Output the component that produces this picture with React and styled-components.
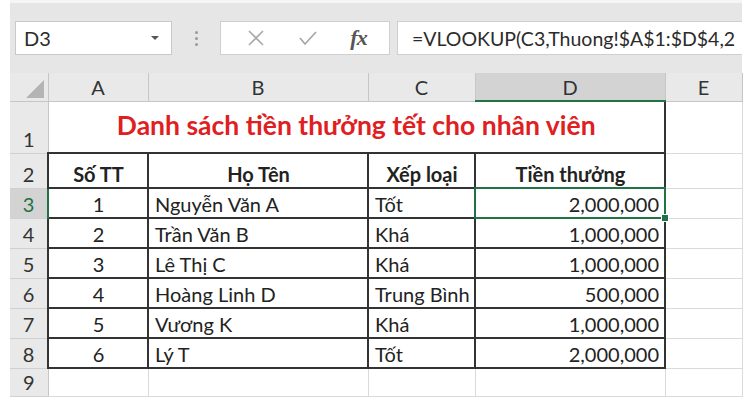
import React from 'react'
import styled, { createGlobalStyle, css } from 'styled-components'

const GlobalStyle = createGlobalStyle`
  body {
    margin: 0;
    background: #fff;
    font-family: Lato, "Open Sans", sans-serif;
  }
`

const green = '#217346'
const line = '#333'
const grid = '#dadada'

const Sheet = styled.div`
  width: 732px;
  padding: 0 8px 5px 10px;
`

const TopBar = styled.div`
  height: 73px;
  background: #e6e6e6;
  display: flex;
  align-items: flex-start;
  padding: 18px 0 0 5px;
  box-sizing: border-box;
  border-top: 3px solid #f6f6f6;
`

const NameBox = styled.div`
  width: 157px;
  height: 34px;
  box-sizing: border-box;
  background: #fff;
  border: 1px solid #c9c9c9;
  display: flex;
  align-items: center;
  justify-content: space-between;
  padding: 0 12px 0 8px;
  font-size: 20px;
  color: #2b2b2b;
`

const Caret = styled.span`
  width: 0;
  height: 0;
  border-left: 4px solid transparent;
  border-right: 4px solid transparent;
  border-top: 4px solid #555;
`

const Grip = styled.div`
  width: 48px;
  height: 34px;
  display: flex;
  flex-direction: column;
  align-items: center;
  justify-content: center;
  gap: 3px;

  span {
    width: 3px;
    height: 3px;
    border-radius: 50%;
    background: #9a9a9a;
  }
`

const ButtonBox = styled.div`
  width: 170px;
  height: 34px;
  box-sizing: border-box;
  background: #fff;
  border: 1px solid #cfcfcf;
  display: flex;
  align-items: center;
  justify-content: space-around;
  padding: 0 6px 0 10px;
`

const Fx = styled.span`
  font-family: "Liberation Serif", serif;
  font-style: italic;
  font-weight: 700;
  font-size: 22px;
  color: #555;
  letter-spacing: -1px;
`

const FormulaBox = styled.div`
  flex: 1;
  height: 34px;
  margin-left: 7px;
  box-sizing: border-box;
  background: #fff;
  border: 1px solid #cfcfcf;
  border-right: 0;
  display: flex;
  align-items: center;
  padding-left: 14px;
  font-size: 19.5px;
  color: #2b2b2b;
  white-space: nowrap;
  overflow: hidden;
`

const Grid = styled.table`
  border-collapse: collapse;
  table-layout: fixed;
  width: 732px;
  font-size: 20px;
  color: #222;
`

const HeadCell = styled.th`
  height: 27px;
  padding: 0;
  background: ${p => (p.$active ? '#d3d3d3' : '#e9e9e9')};
  border-right: 1px solid #c6c6c6;
  border-bottom: ${p => (p.$active ? `2px solid ${green}` : '1px solid #c6c6c6')};
  font-weight: 400;
  font-size: 20px;
  color: #333;
  text-align: center;
  vertical-align: middle;
`

const Corner = styled.th`
  position: relative;
  padding: 0;
  background: #e9e9e9;
  border-right: 1px solid #c6c6c6;
  border-bottom: 1px solid #c6c6c6;

  &::after {
    content: '';
    position: absolute;
    right: 4px;
    bottom: 3px;
    border-left: 18px solid transparent;
    border-bottom: 18px solid #b4b4b4;
  }
`

const RowNum = styled.th`
  padding: 0 0 2px;
  background: ${p => (p.$active ? '#d3d3d3' : '#e9e9e9')};
  color: ${p => (p.$active ? green : '#333')};
  border-bottom: 1px solid #d0d0d0;
  border-right: ${p => (p.$active ? `2px solid ${green}` : '1px solid #c6c6c6')};
  font-weight: 400;
  font-size: 20px;
  text-align: center;
  vertical-align: bottom;
`

const Row = styled.tr`
  height: ${p => p.$h}px;
`

const Cell = styled.td`
  padding: 0 5px 1px 6px;
  border: 1px solid ${grid};
  white-space: nowrap;
  overflow: visible;
  vertical-align: bottom;
  text-align: ${p => p.$align || 'left'};
  ${p => p.$boxed && css`
    border: 2px solid ${line};
  `}
  ${p => p.$head && css`
    font-weight: 700;
    text-align: center;
  `}
`

const TitleCell = styled.td`
  border: 2px solid ${line};
  border-left: 1px solid ${grid};
  border-top: 1px solid ${grid};
  padding: 0 0 4px;
  text-align: center;
  vertical-align: middle;
  color: #e0201f;
  font-weight: 700;
  font-size: 26.5px;
`

const Selected = styled.td`
  position: relative;
  padding: 0 5px 1px;
  border: 2px solid ${line};
  text-align: right;
  vertical-align: bottom;

  &::before {
    content: '';
    position: absolute;
    inset: -2px;
    border: 2px solid ${green};
  }

  &::after {
    content: '';
    position: absolute;
    right: -5px;
    bottom: -5px;
    width: 6px;
    height: 6px;
    background: ${green};
    border: 1px solid #fff;
  }
`

const rows = [
  ['1', 'Nguyễn Văn A', 'Tốt', '2,000,000'],
  ['2', 'Trần Văn B', 'Khá', '1,000,000'],
  ['3', 'Lê Thị C', 'Khá', '1,000,000'],
  ['4', 'Hoàng Linh D', 'Trung Bình', '500,000'],
  ['5', 'Vương K', 'Khá', '1,000,000'],
  ['6', 'Lý T', 'Tốt', '2,000,000'],
]

const CrossIcon = () => (
  <svg width="18" height="18" viewBox="0 0 18 18">
    <path d="M2 2 L16 16 M16 2 L2 16" stroke="#a8a8a8" strokeWidth="1.6" fill="none" />
  </svg>
)

const CheckIcon = () => (
  <svg width="20" height="18" viewBox="0 0 20 18">
    <path d="M2 9 L7 15 L18 3" stroke="#a8a8a8" strokeWidth="1.8" fill="none" />
  </svg>
)

export default function App() {
  return (
    <Sheet>
      <GlobalStyle />
      <TopBar>
        <NameBox>D3<Caret /></NameBox>
        <Grip><span /><span /><span /></Grip>
        <ButtonBox>
          <CrossIcon />
          <CheckIcon />
          <Fx>fx</Fx>
        </ButtonBox>
        <FormulaBox>=VLOOKUP(C3,Thuong!$A$1:$D$4,2</FormulaBox>
      </TopBar>
      <Grid>
        <colgroup>
          <col style={{ width: 38 }} />
          <col style={{ width: 100 }} />
          <col style={{ width: 220 }} />
          <col style={{ width: 107 }} />
          <col style={{ width: 190 }} />
          <col style={{ width: 77 }} />
        </colgroup>
        <thead>
          <tr>
            <Corner />
            <HeadCell>A</HeadCell>
            <HeadCell>B</HeadCell>
            <HeadCell>C</HeadCell>
            <HeadCell $active>D</HeadCell>
            <HeadCell>E</HeadCell>
          </tr>
        </thead>
        <tbody>
          <Row $h={52}>
            <RowNum>1</RowNum>
            <TitleCell colSpan={4}>Danh sách tiền thưởng tết cho nhân viên</TitleCell>
            <Cell />
          </Row>
          <Row $h={35}>
            <RowNum>2</RowNum>
            <Cell $boxed $head>Số TT</Cell>
            <Cell $boxed $head>Họ Tên</Cell>
            <Cell $boxed $head>Xếp loại</Cell>
            <Cell $boxed $head>Tiền thưởng</Cell>
            <Cell />
          </Row>
          {rows.map(([n, name, rank, money], i) => (
            <Row $h={30} key={n}>
              <RowNum $active={i === 0}>{i + 3}</RowNum>
              <Cell $boxed $align="center">{n}</Cell>
              <Cell $boxed>{name}</Cell>
              <Cell $boxed>{rank}</Cell>
              {i === 0
                ? <Selected>{money}</Selected>
                : <Cell $boxed $align="right">{money}</Cell>}
              <Cell />
            </Row>
          ))}
          <Row $h={28}>
            <RowNum>9</RowNum>
            <Cell />
            <Cell />
            <Cell />
            <Cell />
            <Cell />
          </Row>
        </tbody>
      </Grid>
    </Sheet>
  )
}
